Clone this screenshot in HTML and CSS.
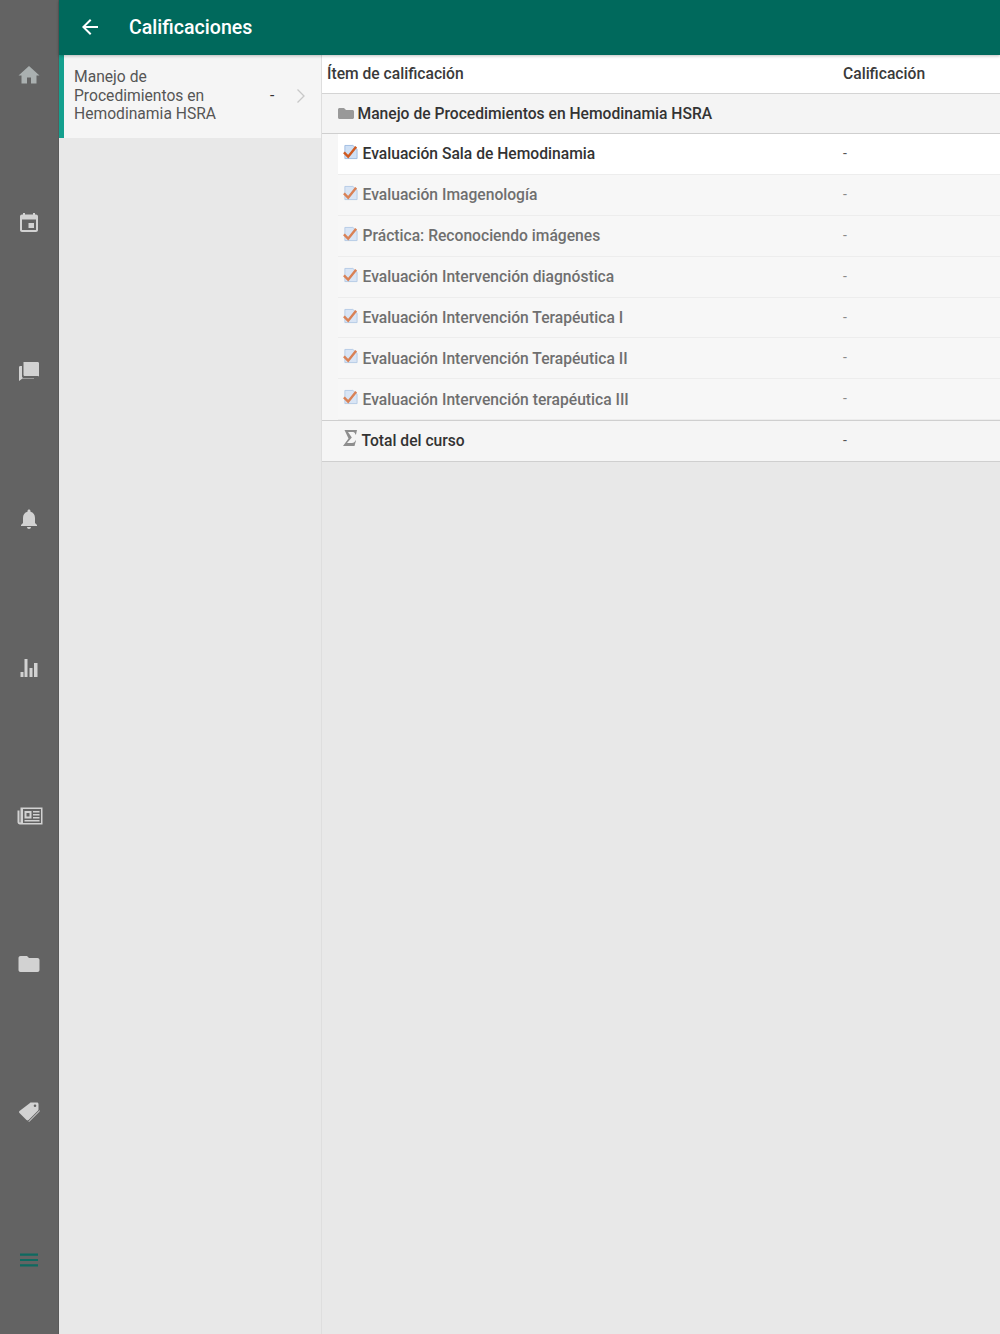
FILE: index.html
```html
<!DOCTYPE html>
<html lang="es">
<head>
<meta charset="utf-8">
<title>Calificaciones</title>
<link rel="stylesheet" href="styles.css">
</head>
<body>
<div class="app">
  <nav class="rail">
    <svg class="ico ico-dim" viewBox="0 0 24 24"><path d="M10 20.500v-6h4v6h5.500v-8H22.500L12 3 1.500 12.500H4.500v8z"/></svg>
    <svg class="ico" viewBox="0 0 24 24"><path d="M17 12h-5.500v5H17v-5zM16 2v1.500H8V2H6v1.500H5c-1.100 0-2 .9-2 2V19c0 1.100.9 2 2 2h14c1.100 0 2-.9 2-2V5.500c0-1.100-.9-2-2-2h-1V2h-2zm3 17H5V8.500h14V19z"/></svg>
    <svg class="ico" viewBox="0 0 24 24"><path d="M6.500 3h14.200c.7 0 1.300.6 1.300 1.300v13.200l-.9-.5H7.800c-.7 0-1.300-.6-1.300-1.300V3z"/><path d="M5 7v10.200c0 1 .8 1.800 1.800 1.800H17v.5H5.500L2 22V8.300C2 7.600 2.600 7 3.300 7H5z"/></svg>
    <svg class="ico" viewBox="0 0 24 24"><path d="M12 22c1.100 0 2-.9 2-2h-4c0 1.100.9 2 2 2zm6-6v-5c0-3.100-1.600-5.600-4.500-6.300V4c0-.8-.7-1.500-1.500-1.500s-1.500.7-1.500 1.500v.7C7.600 5.400 6 7.900 6 11v5l-2 2v1h16v-1l-2-2z"/></svg>
    <svg class="ico" viewBox="0 0 24 24"><path d="M3.500 16h3v5h-3zM7.500 3h3v18h-3zM12.500 12h3v9h-3zM17 7h3.500v14H17z"/></svg>
    <svg class="ico ico-wide" viewBox="0 0 26 20"><path fill-rule="evenodd" d="M4.500 1.500H25.500V18.500H3c-1.400 0-2.500-1.100-2.500-2.500V4.500h2V16c0 .4.300.6.600.6s.4-.2.400-.6V1.500zM6 3v14h18V3H6zm1.500 2h7v7.500h-7V5zm2 2v3.500h3V7h-3zm6.500-2h6.500v1.500H16V5zm0 3h6.500v1.500H16V8zm0 3h6.500v1.500H16V11zM7.500 14h15v1.500h-15V14z"/></svg>
    <svg class="ico" viewBox="0 0 24 24"><path d="M10 4H3.500C2.400 4 1.500 4.900 1.500 6v12c0 1.100.9 2 2 2h17c1.100 0 2-.9 2-2V8c0-1.100-.9-2-2-2H12l-2-2z"/></svg>
    <svg class="ico" viewBox="0 0 24 24"><path fill-rule="evenodd" d="M14 2.500h6c.8 0 1.500.7 1.500 1.500v5.500c0 .4-.2.800-.4 1L11.600 20c-.6.600-1.500.6-2.100 0l-7-7c-.6-.6-.6-1.500 0-2.100L13 2.900c.3-.3.600-.4 1-.4zm4 2a1.300 1.300 0 1 0 0 2.600 1.300 1.300 0 0 0 0-2.600z"/><path d="M22.800 8v2.500c0 .5-.2.900-.5 1.200l-9.500 9.600c-.5.500-1.100.6-1.600.4L22.800 10z"/></svg>
    <svg class="ico ico-teal" viewBox="0 0 24 24"><path d="M3 17.500h18v-2.200H3v2.200zm0-5.400h18V9.900H3v2.200zm0-7.600v2.200h18V4.500H3z"/></svg>
  </nav>
  <div class="main">
    <header class="topbar">
      <svg class="back" viewBox="0 0 24 24"><path d="M20 11H7.830l5.590-5.590L12 4l-8 8 8 8 1.410-1.410L7.830 13H20v-2z"/></svg>
      <h1 class="title">Calificaciones</h1>
    </header>
    <div class="split">
      <aside class="courses">
        <div class="course">
          <span class="course-name">Manejo de Procedimientos en Hemodinamia HSRA</span>
          <span class="course-grade">-</span>
          <svg class="chev" viewBox="0 0 10 16"><path d="M1.500 1.500 8 8l-6.500 6.500"/></svg>
        </div>
      </aside>
      <section class="grades">
        <div class="row head">
          <span class="cell-name">Ítem de calificación</span>
          <span class="cell-grade">Calificación</span>
        </div>
        <div class="row cat">
          <span class="cell-name">
            <svg class="folder" viewBox="0 0 16 13"><path d="M6 1H1.500C.7 1 0 1.700 0 2.500v8C0 11.300.7 12 1.500 12h13c.8 0 1.500-.7 1.500-1.500v-6C16 3.700 15.300 3 14.500 3H8L6 1z"/></svg>Manejo de Procedimientos en Hemodinamia HSRA
          </span>
        </div>
        <div class="items">
          <div class="row item first">
            <span class="cell-name"><svg class="assign" viewBox="0 0 16 16"><path class="pg" d="M2 1h8.500L15 5v10H2z"/><path class="ck" d="M1 8.500 5.500 13 14 2.500"/></svg>Evaluación Sala de Hemodinamia</span>
            <span class="cell-grade">-</span>
          </div>
          <div class="row item">
            <span class="cell-name"><svg class="assign" viewBox="0 0 16 16"><path class="pg" d="M2 1h8.500L15 5v10H2z"/><path class="ck" d="M1 8.500 5.500 13 14 2.500"/></svg>Evaluación Imagenología</span>
            <span class="cell-grade">-</span>
          </div>
          <div class="row item">
            <span class="cell-name"><svg class="assign" viewBox="0 0 16 16"><path class="pg" d="M2 1h8.500L15 5v10H2z"/><path class="ck" d="M1 8.500 5.500 13 14 2.500"/></svg>Práctica: Reconociendo imágenes</span>
            <span class="cell-grade">-</span>
          </div>
          <div class="row item">
            <span class="cell-name"><svg class="assign" viewBox="0 0 16 16"><path class="pg" d="M2 1h8.500L15 5v10H2z"/><path class="ck" d="M1 8.500 5.500 13 14 2.500"/></svg>Evaluación Intervención diagnóstica</span>
            <span class="cell-grade">-</span>
          </div>
          <div class="row item">
            <span class="cell-name"><svg class="assign" viewBox="0 0 16 16"><path class="pg" d="M2 1h8.500L15 5v10H2z"/><path class="ck" d="M1 8.500 5.500 13 14 2.500"/></svg>Evaluación Intervención Terapéutica I</span>
            <span class="cell-grade">-</span>
          </div>
          <div class="row item">
            <span class="cell-name"><svg class="assign" viewBox="0 0 16 16"><path class="pg" d="M2 1h8.500L15 5v10H2z"/><path class="ck" d="M1 8.500 5.500 13 14 2.500"/></svg>Evaluación Intervención Terapéutica II</span>
            <span class="cell-grade">-</span>
          </div>
          <div class="row item">
            <span class="cell-name"><svg class="assign" viewBox="0 0 16 16"><path class="pg" d="M2 1h8.500L15 5v10H2z"/><path class="ck" d="M1 8.500 5.500 13 14 2.500"/></svg>Evaluación Intervención terapéutica III</span>
            <span class="cell-grade">-</span>
          </div>
        </div>
        <div class="row total">
          <span class="cell-name"><svg class="sigma" viewBox="0 0 14 16"><path d="M1.500 0H14l-1 4.500h-.7C12 2.600 11.200 2 8.500 2H5l3.800 5.500L4 13h5c2 0 2.800-1 3.400-2.500h.6L11.500 16H0l5.500-7.500L1.500 0z"/></svg>Total del curso</span>
          <span class="cell-grade">-</span>
        </div>
      </section>
    </div>
  </div>
</div>
</body>
</html>
```
FILE: styles.css
```css
* { box-sizing: border-box; }
html, body { margin: 0; height: 100%; }
body {
  font-family: Roboto, "Liberation Sans", sans-serif;
  background: #e8e8e8;
  color: #333;
  overflow: hidden;
}
.app { display: flex; height: 1334px; }

.rail {
  width: 59px;
  flex: none;
  background: #636363;
  box-shadow: inset -1px 0 0 #5a5a5a;
  display: flex;
  flex-direction: column;
  align-items: center;
  padding-top: 62.5px;
  padding-right: 1px;
  gap: 124.25px;
}
.ico { width: 24px; height: 24px; fill: #d2d2d2; flex: none; }
.ico-dim { fill: #aab0b0; }
.ico-wide { width: 26px; margin-left: 2px; }
.ico-teal { fill: #0e6a60; }

.main { flex: 1; display: flex; flex-direction: column; min-width: 0; }
.topbar {
  height: 55px;
  flex: none;
  background: #00695c;
  display: flex;
  align-items: center;
  padding-left: 19px;
  padding-bottom: 1px;
  position: relative;
  box-shadow: 0 1px 3px rgba(0,0,0,.25);
}
.back { width: 24px; height: 24px; fill: #fff; flex: none; }
.title {
  margin: 0 0 0 27px;
  font-size: 19.6px;
  font-weight: 500;
  color: #fff;
}

.split { flex: 1; display: flex; min-height: 0; }
.courses {
  width: 263px;
  flex: none;
  border-right: 1px solid #dedede;
}
.course {
  height: 83px;
  background: #f5f5f5;
  border-left: 5px solid #14a08e;
  display: flex;
  align-items: center;
  padding-left: 10px;
  padding-bottom: 1px;
  font-size: 15.65px;
  line-height: 18.7px;
  color: #555;
}
.course-name { width: 178px; flex: none; }
.course-grade { width: 26px; flex: none; color: #333; margin-left: 18px; }
.chev { width: 10px; height: 16px; fill: none; stroke: #c8c8c8; stroke-width: 1.3; flex: none; }

.grades { flex: 1; min-width: 0; }
.row { display: flex; align-items: center; font-size: 15.65px; font-weight: 500; }
.cell-name { display: flex; align-items: center; width: 521px; flex: none; }
.cell-grade { flex: 1; }
.head {
  height: 39px;
  background: #fff;
  border-bottom: 1px solid #d4d4d4;
  padding-left: 5px;
  padding-bottom: 2px;
  color: #3a3a3a;
}
.head .cell-grade { margin-left: -5px; }
.cat {
  height: 40px;
  background: #f4f4f4;
  border-bottom: 1px solid #cfcfcf;
  padding-left: 16px;
  padding-bottom: 1px;
}
.folder { width: 16px; height: 13px; fill: #999; margin-right: 3.5px; flex: none; }
.items { padding-left: 16px; background: #f6f6f6; }
.item {
  height: 40.9px;
  background: #f7f7f7;
  border-bottom: 1px solid #ededed;
  color: #6f6f6f;
  padding-left: 5px;
}
.item .cell-grade { font-weight: 400; color: #8a8a8a; font-size: 14px; padding-bottom: 2px; }
.item .cell-name { width: 500px; }
.item.first { background: #fff; color: #333; }
.item.first .cell-grade { color: #555; }
.item.first .assign { opacity: 1; }
.assign { width: 15px; height: 16px; margin-right: 4.5px; margin-top: -4px; flex: none; opacity: .75; }
.pg { fill: #cfe0f5; stroke: #9fbce0; stroke-width: 1; }
.ck { fill: none; stroke: #cf5a20; stroke-width: 2.6; }
.total {
  height: 41.4px;
  background: #f5f5f5;
  border-top: 1px solid #cfcfcf;
  border-bottom: 1px solid #cfcfcf;
  padding-left: 21px;
  padding-bottom: 1px;
  color: #333;
}
.total .cell-name { width: 500px; }
.total .cell-grade { font-weight: 400; font-size: 14px; color: #555; }
.sigma { width: 14px; height: 16px; fill: #8e8e8e; margin-right: 4.5px; margin-top: -4px; flex: none; }
```
